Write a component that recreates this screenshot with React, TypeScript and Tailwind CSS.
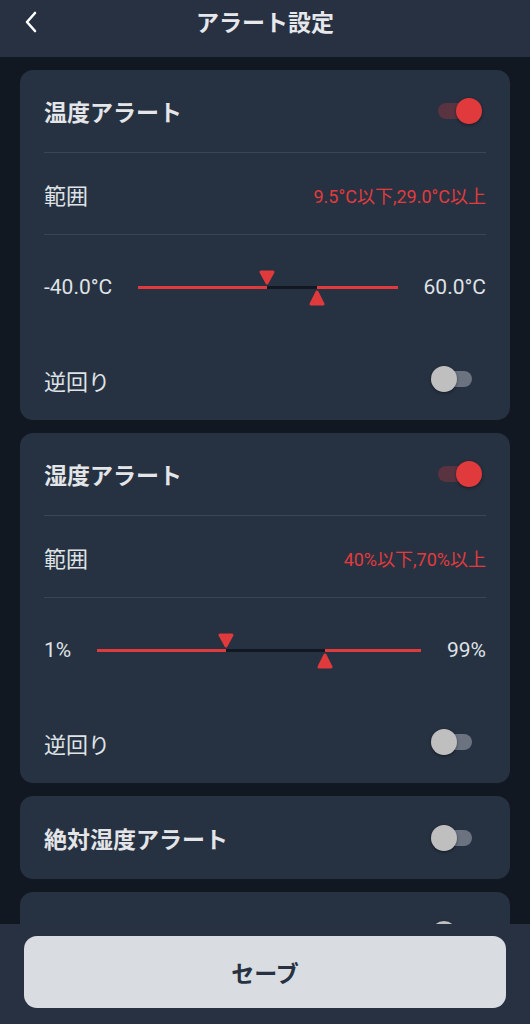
import React from 'react';

const FONT = { fontFamily: '"Roboto", "Noto Sans CJK JP", sans-serif' };

const Toggle = ({ on }: { on: boolean }) => {
  return (
    <div className="relative w-[51px] h-[26px] mr-[4px]">
      <div
        className={`absolute left-[7px] top-[5px] w-[34px] h-[16px] rounded-full ${
          on ? 'bg-[#5a3341]' : 'bg-[#6b7381]'
        }`}
      />
      <div
        className={`absolute top-0 w-[26px] h-[26px] rounded-full shadow-[0_1px_3px_rgba(0,0,0,0.45)] ${
          on ? 'right-0 bg-[#e03a3c]' : 'left-0 bg-[#bfbfbf]'
        }`}
      />
    </div>
  );
};

const ThumbDown = () => (
  <svg width="16" height="15" viewBox="0 0 16 15">
    <path d="M2 2 L14 2 L8 13 Z" fill="#e03a3c" stroke="#e03a3c" strokeWidth="3" strokeLinejoin="round" />
  </svg>
);

const ThumbUp = () => (
  <svg width="16" height="16" viewBox="0 0 16 16">
    <path d="M8 2 L14 14 L2 14 Z" fill="#e03a3c" stroke="#e03a3c" strokeWidth="3" strokeLinejoin="round" />
  </svg>
);

type SliderProps = {
  min: number;
  max: number;
  low: number;
  high: number;
  minLabel: string;
  maxLabel: string;
};

const RangeSlider = ({ min, max, low, high, minLabel, maxLabel }: SliderProps) => {
  const lowPct = ((low - min) / (max - min)) * 100;
  const highPct = ((high - min) / (max - min)) * 100;
  return (
    <div className="flex items-center h-[105px] gap-[26px]">
      <div className="text-[21px] text-[#dfe2e6]">{minLabel}</div>
      <div className="relative flex-1 h-[3px] flex">
        <div className="h-full bg-[#e03a3c]" style={{ width: `${lowPct}%` }} />
        <div className="h-full bg-[#121822]" style={{ width: `${highPct - lowPct}%` }} />
        <div className="h-full flex-1 bg-[#e03a3c]" />
        <div className="absolute bottom-[4px] -translate-x-1/2" style={{ left: `${lowPct}%` }}>
          <ThumbDown />
        </div>
        <div className="absolute top-[4px] -translate-x-1/2" style={{ left: `${highPct}%` }}>
          <ThumbUp />
        </div>
      </div>
      <div className="text-[21px] text-[#dfe2e6]">{maxLabel}</div>
    </div>
  );
};

type AlertCardProps = {
  title: string;
  rangeText: string;
  slider: SliderProps;
};

const AlertCard = ({ title, rangeText, slider }: AlertCardProps) => {
  return (
    <div className="rounded-[13px] bg-[#263141] px-[24px]">
      <div className="flex items-center justify-between h-[82px]">
        <div className="pt-[6px] text-[23px] font-bold text-[#e3e5e8]">{title}</div>
        <Toggle on />
      </div>
      <div className="h-px bg-[#3a4555]" />
      <div className="flex items-center justify-between h-[81px]">
        <div className="pt-[6px] text-[22px] text-[#dfe2e6]">範囲</div>
        <div className="pt-[6px] text-[18px] text-[#e23b3d]">{rangeText}</div>
      </div>
      <div className="h-px bg-[#3a4555]" />
      <RangeSlider {...slider} />
      <div className="flex items-center justify-between h-[80px] pb-[2px]">
        <div className="pt-[6px] text-[22px] text-[#dfe2e6]">逆回り</div>
        <Toggle on={false} />
      </div>
    </div>
  );
};

export default function App() {
  return (
    <div className="w-[530px] h-[1024px] flex flex-col bg-[#121822] overflow-hidden" style={FONT}>
      <div className="h-[57px] shrink-0 bg-[#273142] flex items-center relative">
        <div className="pl-[24px] pb-[14px] flex items-center">
          <svg width="14" height="22" viewBox="0 0 14 22">
            <path d="M11 2 L3 11 L11 20" fill="none" stroke="#ffffff" strokeWidth="2.6" strokeLinecap="round" strokeLinejoin="round" />
          </svg>
        </div>
        <div className="absolute inset-x-0 top-0 h-[57px] flex items-center justify-center pb-[8px] text-[23px] font-bold text-[#e6e8eb] pointer-events-none">
          アラート設定
        </div>
      </div>

      <div className="flex-1 overflow-hidden px-[20px] pt-[13px] flex flex-col gap-[13px]">
        <AlertCard
          title="温度アラート"
          rangeText="9.5°C以下,29.0°C以上"
          slider={{ min: -40, max: 60, low: 9.5, high: 29, minLabel: '-40.0°C', maxLabel: '60.0°C' }}
        />
        <AlertCard
          title="湿度アラート"
          rangeText="40%以下,70%以上"
          slider={{ min: 1, max: 99, low: 40, high: 70, minLabel: '1%', maxLabel: '99%' }}
        />
        <div className="rounded-[13px] bg-[#263141] px-[24px] shrink-0">
          <div className="flex items-center justify-between h-[83px]">
            <div className="pt-[8px] text-[23px] font-bold text-[#e3e5e8]">絶対湿度アラート</div>
            <Toggle on={false} />
          </div>
        </div>
        <div className="rounded-[13px] bg-[#263141] px-[24px] shrink-0">
          <div className="flex items-center justify-end h-[83px]">
            <Toggle on={false} />
          </div>
        </div>
      </div>

      <div className="h-[100px] shrink-0 bg-[#273142] px-[24px] pt-[12px]">
        <button className="w-full h-[72px] pt-[6px] rounded-[13px] bg-[#d9dde1] text-[23px] font-bold text-[#273142]">
          セーブ
        </button>
      </div>
    </div>
  );
}
